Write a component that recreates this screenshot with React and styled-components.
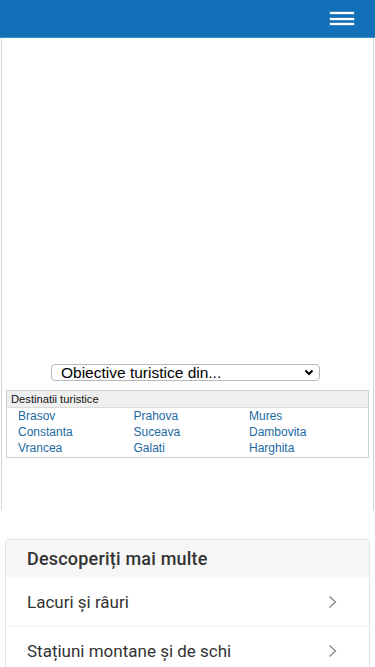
import styled, { createGlobalStyle } from "styled-components";

const Global = createGlobalStyle`
  html, body { margin: 0; padding: 0; background: #fff; }
  body { font-family: "Liberation Sans", Arial, sans-serif; }
`;

const Header = styled.header`
    height: 37px;
    background-color: #1170b8;
    border-bottom: 1px solid #3f8ccb;
    display: flex;
    align-items: center;
    justify-content: flex-end;
    padding-right: 21px;
`;
const Burger = styled.button`
    width: 24px; height: 13px;
    padding: 0; border: 0; background: none;
    display: flex; flex-direction: column; justify-content: space-between;
    span {
        display: block; height: 2px; background: #fff;
        box-shadow: 0 0 0 0.5px rgba(255,255,255,0.35);
    }
`;
const Main = styled.main`
    margin: 0 1px;
    height: 472px;
    border-left: 1px solid #d4d4d4;
    border-right: 1px solid #d4d4d4;
    padding-top: 326px;
    box-sizing: border-box;
`;
const SelectWrap = styled.div`
    position: relative;
    width: 269px;
    margin: 0 0 0 49px;
    svg {
        position: absolute; right: 6px; top: 5px;
        pointer-events: none;
    }
`;
const Select = styled.select`
    appearance: none;
    width: 100%; height: 17px;
    border: 1px solid #b8b8b8; border-radius: 4px;
    background: #fff;
    font-family: "Liberation Sans", Arial, sans-serif;
    font-size: 15.5px; color: #000;
    padding: 0 0 0 9px;
    line-height: 15px;
`;
const Box = styled.div`
    margin: 8px 4px 0 4px;
    border: 1px solid #cfcfcf;
`;
const BoxHead = styled.div`
    height: 16px;
    background: #efefef;
    border-bottom: 1px solid #dcdcdc;
    font-size: 11.2px;
    line-height: 16px;
    padding-left: 4px;
    color: #111;
`;
const Links = styled.div`
    display: grid;
    grid-template-columns: 115.5px 115.5px 1fr;
    padding: 0 0 1px 11px;
    a {
        font-size: 12px;
        line-height: 16px;
        color: #1b6aa3;
        text-decoration: none;
    }
`;
const Card = styled.section`
    margin: 29px 5px 0 5px;
    border: 1px solid #e2e2e4;
    border-radius: 4px;
    font-family: Roboto, "Noto Sans", sans-serif;
    overflow: hidden;
`;
const CardHead = styled.h3`
    margin: 0;
    height: 38px;
    background: #f7f7f8;
    font-size: 18px;
    font-weight: 500;
    color: #333;
    line-height: 38px;
    padding-left: 21px;
    letter-spacing: 0.2px;
`;
const Row = styled.a`
    display: flex;
    align-items: center;
    justify-content: space-between;
    height: 48px;
    padding: 0 32px 0 21px;
    border-top: ${p => p.first ? "0" : "1px solid #f0f0f2"};
    font-size: 17px;
    color: #333;
    text-decoration: none;
`;

const Chevron = () => (
    <svg width="9" height="14" viewBox="0 0 9 14">
        <path d="M1.5 1.5 L7.5 7 L1.5 12.5" fill="none" stroke="#8a8a8e" strokeWidth="1.4" />
    </svg>
);

const places = ["Brasov", "Prahova", "Mures", "Constanta", "Suceava", "Dambovita", "Vrancea", "Galati", "Harghita"];

const App = () => {
    return (<>
    <Global />
    <Header>
        <Burger aria-label="menu"><span /><span /><span /></Burger>
    </Header>
    <Main>
        <SelectWrap>
            <Select defaultValue="">
                <option value="">Obiective turistice din...</option>
            </Select>
            <svg width="10" height="7" viewBox="0 0 10 7">
                <path d="M1.5 1.5 L5 5 L8.5 1.5" fill="none" stroke="#000" strokeWidth="2" />
            </svg>
        </SelectWrap>
        <Box>
            <BoxHead>Destinatii turistice</BoxHead>
            <Links>
                {places.map(p => <a key={p} href="#">{p}</a>)}
            </Links>
        </Box>
    </Main>
    <Card>
        <CardHead>Descoperiți mai multe</CardHead>
        <Row first href="#">Lacuri și râuri<Chevron /></Row>
        <Row href="#">Stațiuni montane și de schi<Chevron /></Row>
    </Card>
    </>)
}
export default App;
